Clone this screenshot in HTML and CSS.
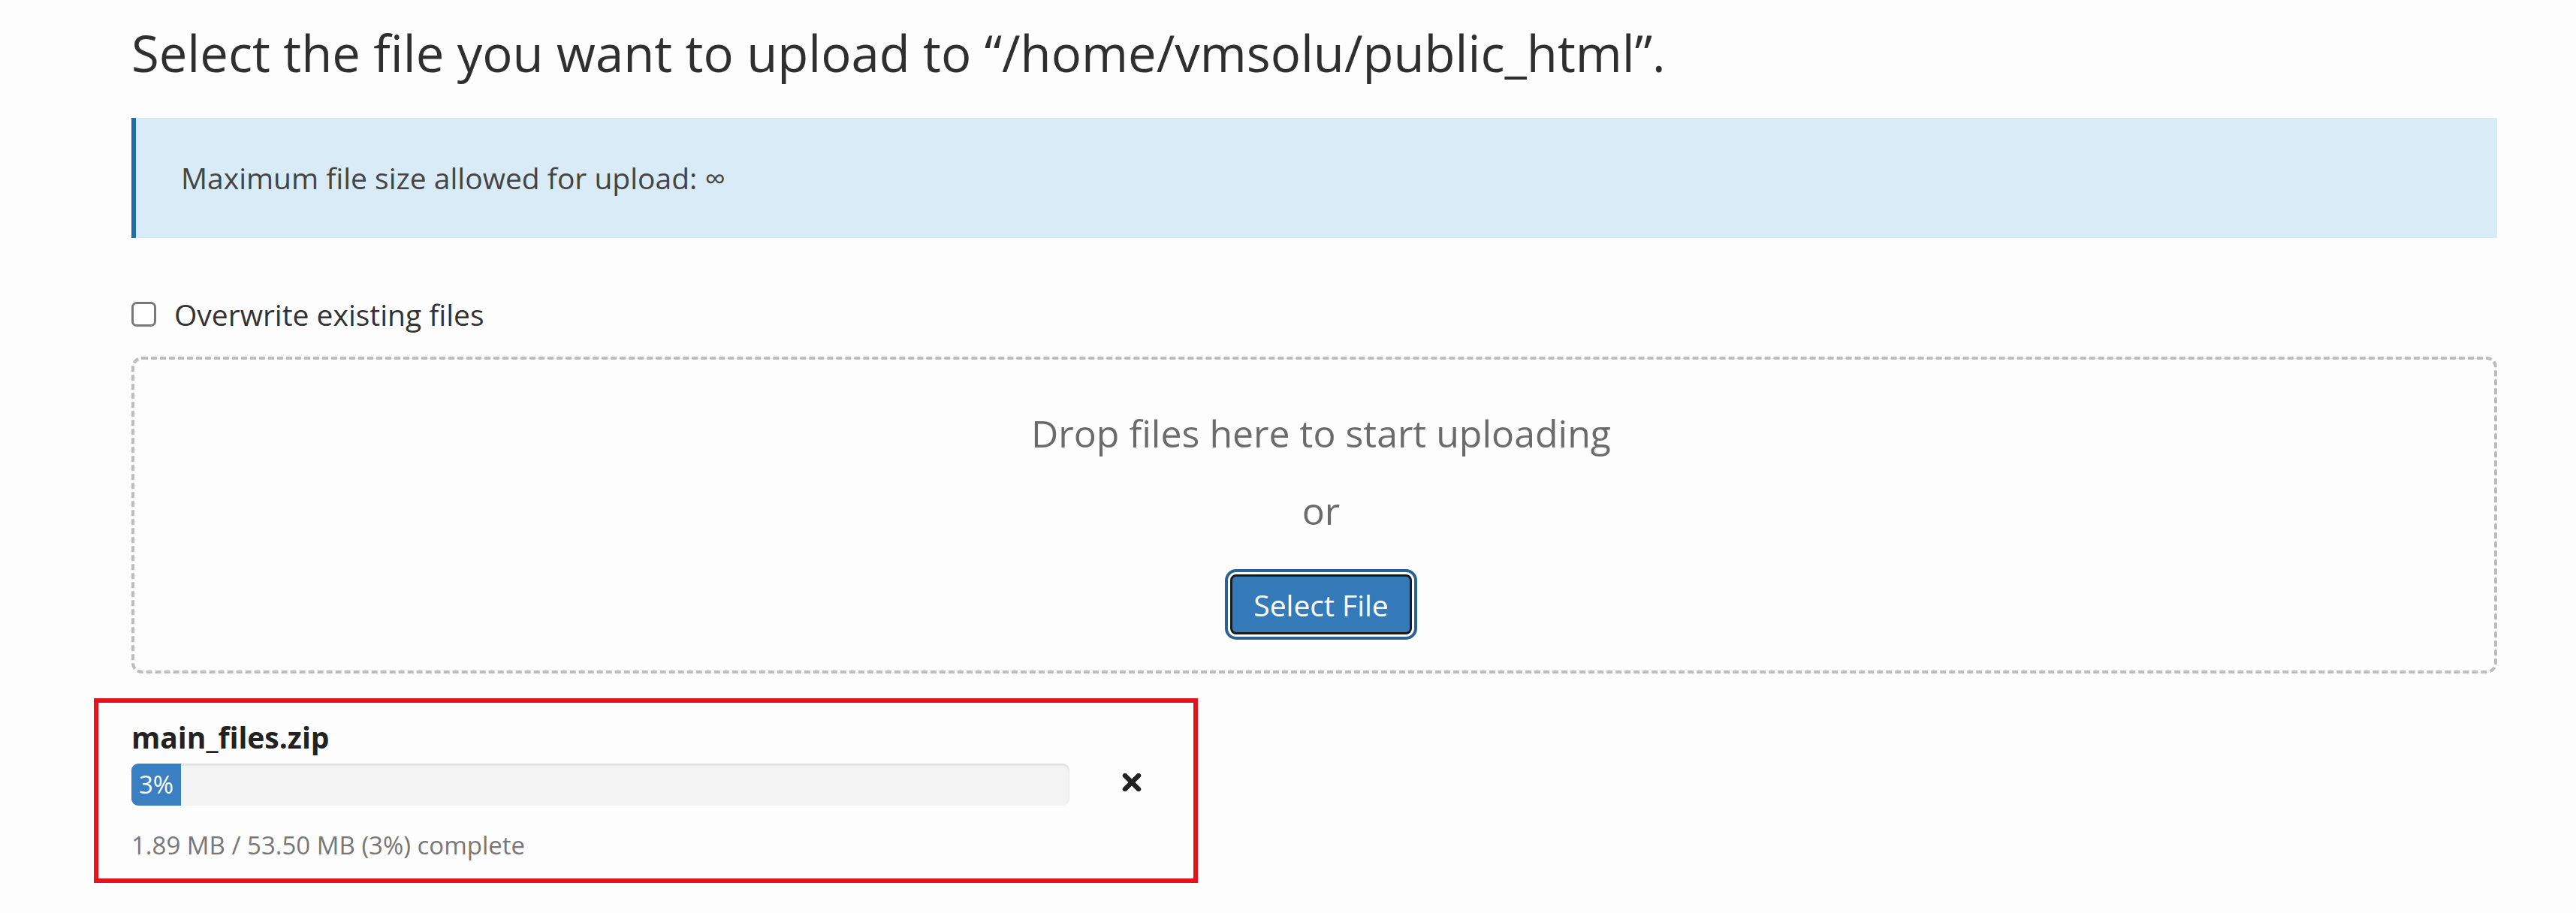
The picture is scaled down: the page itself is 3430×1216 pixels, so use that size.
FILE: index.html
```html
<!DOCTYPE html>
<html lang="en">
<head>
  <meta charset="UTF-8">
  <meta name="viewport" content="width=device-width, initial-scale=1.0">
  <title>Upload Files</title>
  <link rel="stylesheet" href="styles.css">
</head>
<body>
  <div class="container">
    <h2>Select the file you want to upload to “/home/vmsolu/public_html”.</h2>

    <div class="alert">Maximum file size allowed for upload: ∞</div>

    <label class="overwrite">
      <input type="checkbox" class="check">
      <span>Overwrite existing files</span>
    </label>

    <div class="dropzone">
      <div class="drop-text">Drop files here to start uploading</div>
      <div class="drop-or">or</div>
      <button class="select-btn">Select File</button>
    </div>

    <div class="upload-item">
      <div class="file-name">main_files.zip</div>
      <div class="progress-row">
        <div class="progress">
          <div class="progress-bar" style="width:3%">3%</div>
        </div>
        <span class="remove">
          <svg width="26" height="24" viewBox="0 0 26 24">
            <path d="M4 3 L22 21 M22 3 L4 21" stroke="#222" stroke-width="6.5" stroke-linecap="round"/>
          </svg>
        </span>
      </div>
      <div class="file-status">1.89 MB / 53.50 MB (3%) complete</div>
    </div>
  </div>
</body>
</html>
```

FILE: styles.css
```css
:root {
  --text: #333333;
  --muted: #6b6b6b;
  --blue: #3479b8;
  --blue-dark: #2a6296;
  --info-bg: #d9ebf7;
  --info-border: #1f6ea8;
  --dash: #bdbdbd;
  --red: #e3141b;
}
body {
  margin: 0;
  background: #fdfdfd;
  font-family: 'Open Sans', 'Liberation Sans', sans-serif;
  color: var(--text);
}
.container {
  width: 3150px;
  padding: 34px 0 0 175px;
}
h2 {
  margin: 0;
  font-size: 67px;
  font-weight: normal;
  line-height: 72px;
  color: #2f2f2f;
}
.alert {
  margin-top: 51px;
  height: 160px;
  box-sizing: border-box;
  display: flex;
  align-items: center;
  padding-left: 60px;
  padding-bottom: 2px;
  background: var(--info-bg);
  border-left: 6px solid var(--info-border);
  font-size: 39px;
  color: #444;
}
.overwrite {
  margin-top: 79px;
  height: 44px;
  display: flex;
  align-items: center;
  gap: 24px;
  font-size: 39px;
  color: #333;
}
.check {
  appearance: none;
  -webkit-appearance: none;
  margin: 0;
  width: 33px;
  height: 33px;
  border: 3px solid #787878;
  border-radius: 7px;
  background: #fff;
}
.dropzone {
  margin-top: 35px;
  height: 422px;
  box-sizing: border-box;
  border: 4px dashed var(--dash);
  border-radius: 14px;
  padding: 66px 0 0 18px;
  display: flex;
  flex-direction: column;
  align-items: center;
  color: var(--muted);
  font-size: 50px;
}
.drop-text, .drop-or {
  line-height: 64px;
}
.drop-or {
  margin-top: 39px;
}
.select-btn {
  margin-top: 53px;
  height: 80px;
  padding: 0 28px;
  background: var(--blue);
  color: #fff;
  font-family: 'Open Sans', 'Liberation Sans', sans-serif;
  font-size: 39px;
  border: 3px solid #1b1b1b;
  border-radius: 8px;
  box-shadow: 0 0 0 3px #fff, 0 0 0 7px var(--blue-dark);
  cursor: pointer;
}
.upload-item {
  margin: 33px 0 0 -50px;
  width: 1470px;
  box-sizing: border-box;
  border: 6px solid var(--red);
  padding: 22px 0 24px 44px;
}
.file-name {
  font-size: 39px;
  font-weight: bold;
  line-height: 48px;
  color: #222;
}
.progress-row {
  margin-top: 11px;
  display: flex;
  align-items: center;
}
.progress {
  width: 1249px;
  height: 56px;
  background: #f3f3f3;
  border-radius: 9px;
  box-shadow: inset 0 2px 3px rgba(0,0,0,0.1);
  overflow: hidden;
}
.progress-bar {
  min-width: 66px;
  height: 100%;
  background: #3a7fc1;
  color: #fff;
  font-size: 33px;
  line-height: 56px;
  text-align: center;
}
.remove {
  margin-left: 70px;
  display: flex;
  margin-top: -6px;
}
.file-status {
  margin-top: 33px;
  font-size: 33px;
  line-height: 40px;
  color: #777;
}
```
